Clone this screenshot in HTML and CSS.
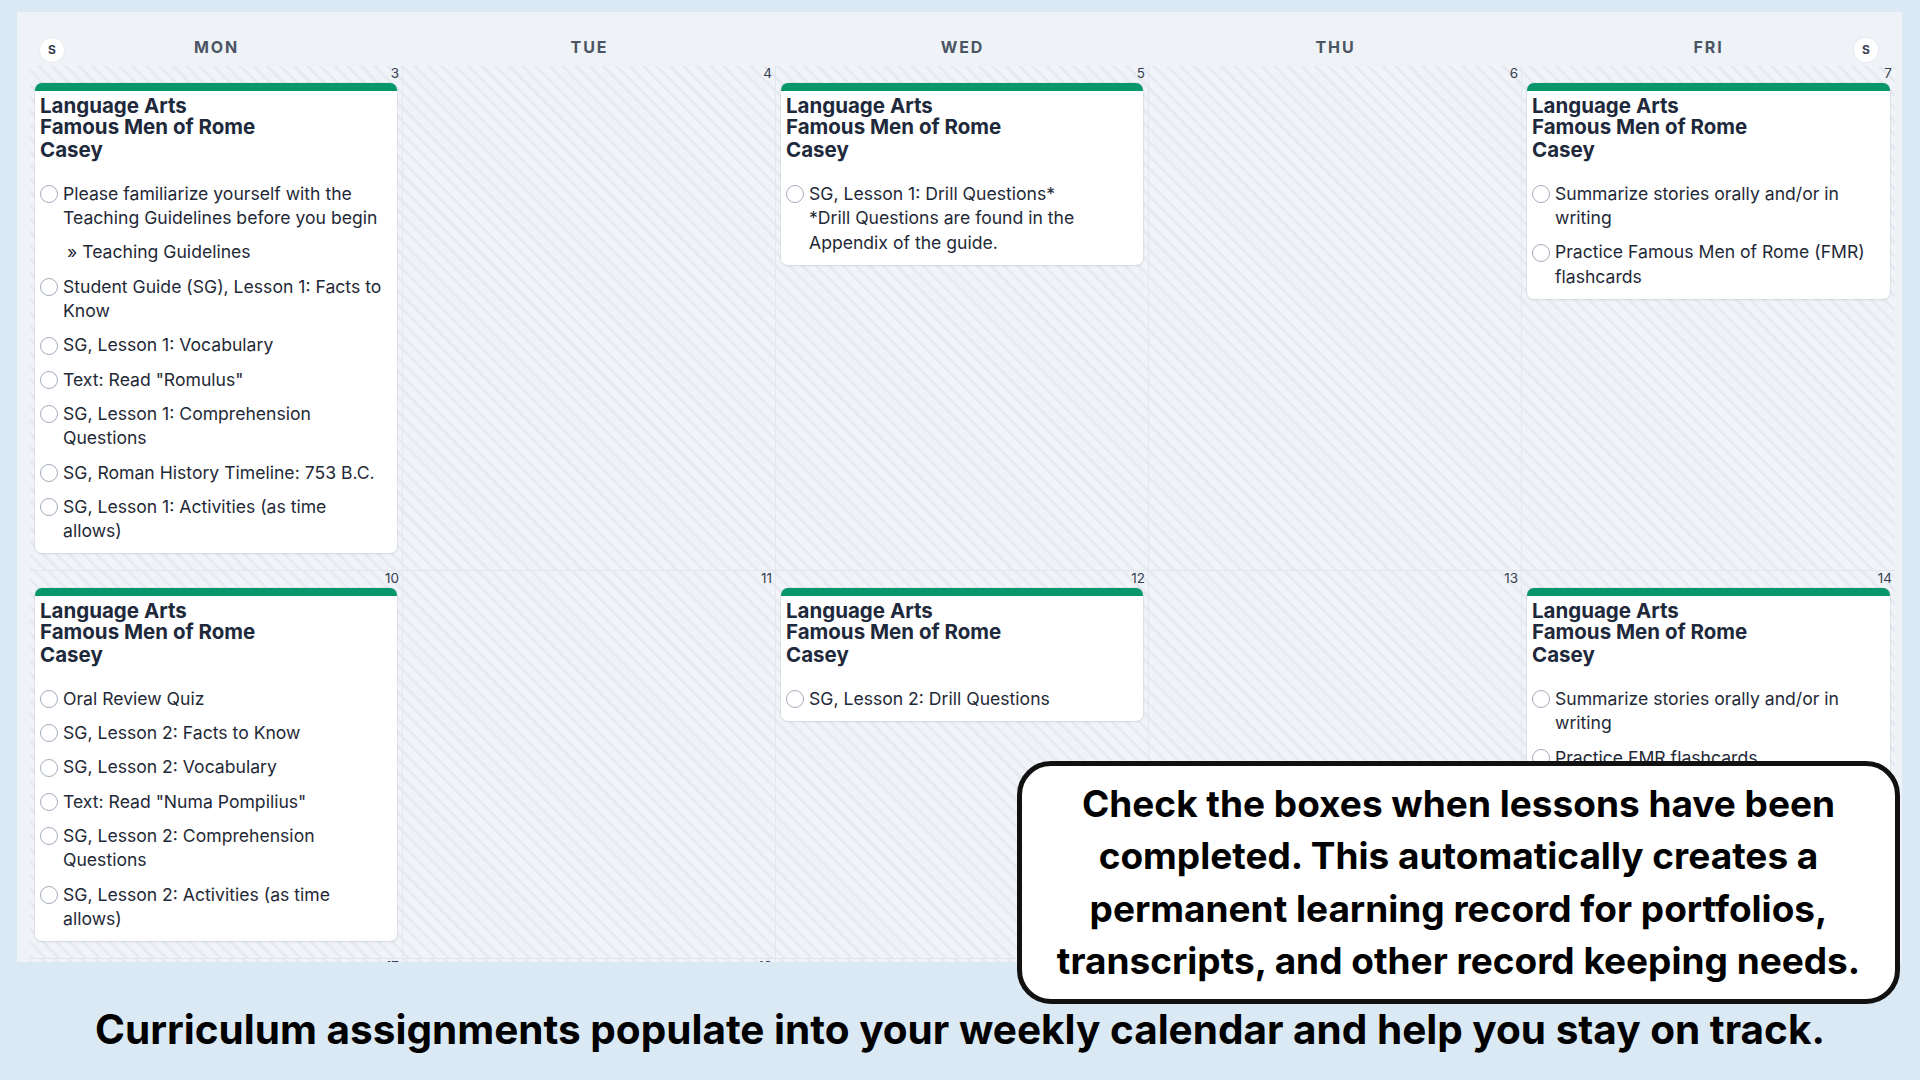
FILE: index.html
```html
<!DOCTYPE html>
<html lang="en">
<head>
<meta charset="utf-8">
<title>Weekly Planner</title>
<link rel="stylesheet" href="styles.css">
</head>
<body>
<div class="page">
  <main class="calendar">
    <div class="week-head">
      <div class="day-head">MON<span class="wk-toggle wk-toggle-start">S</span></div>
      <div class="day-head">TUE</div>
      <div class="day-head">WED</div>
      <div class="day-head">THU</div>
      <div class="day-head">FRI<span class="wk-toggle wk-toggle-end">S</span></div>
    </div>

    <div class="week">
      <div class="day">
        <div class="date">3</div>
        <article class="card">
          <div class="card-title">Language Arts<br>Famous Men of Rome</div>
          <div class="card-student">Casey</div>
          <ul class="tasks">
            <li class="task"><span class="check"></span><span class="task-text">Please familiarize yourself with the Teaching Guidelines before you begin<span class="task-link">» Teaching Guidelines</span></span></li>
            <li class="task"><span class="check"></span><span class="task-text">Student Guide (SG), Lesson 1: Facts to Know</span></li>
            <li class="task"><span class="check"></span><span class="task-text">SG, Lesson 1: Vocabulary</span></li>
            <li class="task"><span class="check"></span><span class="task-text">Text: Read "Romulus"</span></li>
            <li class="task"><span class="check"></span><span class="task-text">SG, Lesson 1: Comprehension Questions</span></li>
            <li class="task"><span class="check"></span><span class="task-text">SG, Roman History Timeline: 753 B.C.</span></li>
            <li class="task"><span class="check"></span><span class="task-text">SG, Lesson 1: Activities (as time allows)</span></li>
          </ul>
        </article>
      </div>
      <div class="day"><div class="date">4</div></div>
      <div class="day">
        <div class="date">5</div>
        <article class="card">
          <div class="card-title">Language Arts<br>Famous Men of Rome</div>
          <div class="card-student">Casey</div>
          <ul class="tasks">
            <li class="task"><span class="check"></span><span class="task-text">SG, Lesson 1: Drill Questions*<br>*Drill Questions are found in the Appendix of the guide.</span></li>
          </ul>
        </article>
      </div>
      <div class="day"><div class="date">6</div></div>
      <div class="day">
        <div class="date">7</div>
        <article class="card">
          <div class="card-title">Language Arts<br>Famous Men of Rome</div>
          <div class="card-student">Casey</div>
          <ul class="tasks">
            <li class="task"><span class="check"></span><span class="task-text">Summarize stories orally and/or in writing</span></li>
            <li class="task"><span class="check"></span><span class="task-text">Practice Famous Men of Rome (FMR) flashcards</span></li>
          </ul>
        </article>
      </div>
    </div>

    <div class="week">
      <div class="day">
        <div class="date">10</div>
        <article class="card">
          <div class="card-title">Language Arts<br>Famous Men of Rome</div>
          <div class="card-student">Casey</div>
          <ul class="tasks">
            <li class="task"><span class="check"></span><span class="task-text">Oral Review Quiz</span></li>
            <li class="task"><span class="check"></span><span class="task-text">SG, Lesson 2: Facts to Know</span></li>
            <li class="task"><span class="check"></span><span class="task-text">SG, Lesson 2: Vocabulary</span></li>
            <li class="task"><span class="check"></span><span class="task-text">Text: Read "Numa Pompilius"</span></li>
            <li class="task"><span class="check"></span><span class="task-text">SG, Lesson 2: Comprehension Questions</span></li>
            <li class="task"><span class="check"></span><span class="task-text">SG, Lesson 2: Activities (as time allows)</span></li>
          </ul>
        </article>
      </div>
      <div class="day"><div class="date">11</div></div>
      <div class="day">
        <div class="date">12</div>
        <article class="card">
          <div class="card-title">Language Arts<br>Famous Men of Rome</div>
          <div class="card-student">Casey</div>
          <ul class="tasks">
            <li class="task"><span class="check"></span><span class="task-text">SG, Lesson 2: Drill Questions</span></li>
          </ul>
        </article>
      </div>
      <div class="day"><div class="date">13</div></div>
      <div class="day">
        <div class="date">14</div>
        <article class="card">
          <div class="card-title">Language Arts<br>Famous Men of Rome</div>
          <div class="card-student">Casey</div>
          <ul class="tasks">
            <li class="task"><span class="check"></span><span class="task-text">Summarize stories orally and/or in writing</span></li>
            <li class="task"><span class="check"></span><span class="task-text">Practice FMR flashcards</span></li>
          </ul>
        </article>
      </div>
    </div>

    <div class="week">
      <div class="day"><div class="date">17</div></div>
      <div class="day"><div class="date">18</div></div>
      <div class="day"><div class="date">19</div></div>
      <div class="day"><div class="date">20</div></div>
      <div class="day"><div class="date">21</div></div>
    </div>
  </main>

  <p class="caption">Curriculum assignments populate into your weekly calendar and help you stay on track.</p>

  <aside class="callout">Check the boxes when lessons have been<br>completed. This automatically creates a<br>permanent learning record for portfolios,<br>transcripts, and other record keeping needs.</aside>
</div>
</body>
</html>
```

FILE: styles.css
```css
* {
  box-sizing: border-box;
}

html, body {
  margin: 0;
  padding: 0;
}

body {
  background: #dbe9f4;
  font-family: "Inter", "Noto Sans", "Liberation Sans", sans-serif;
  color: #1f2937;
  width: 1920px;
  height: 1080px;
  overflow: hidden;
}

.page {
  position: relative;
  width: 1920px;
  height: 1080px;
  padding-top: 12px;
}

/* Calendar panel */
.calendar {
  margin-left: 17px;
  width: 1885px;
  height: 950px;
  padding: 0 7px 0 13px;
  background: #eff3f8;
  overflow: hidden;
}

.week-head,
.week {
  display: grid;
  grid-template-columns: repeat(5, 373px);
}

.day-head {
  position: relative;
  height: 54px;
  padding-top: 24px;
  text-align: center;
  font-size: 16px;
  line-height: 22px;
  font-weight: 700;
  letter-spacing: 0.12em;
  color: #4b5563;
}

.wk-toggle {
  position: absolute;
  top: 26px;
  width: 24px;
  height: 24px;
  border-radius: 50%;
  background: #ffffff;
  box-shadow: 0 0 0 1px rgba(15, 23, 42, 0.03);
  font-size: 12px;
  line-height: 24px;
  font-weight: 700;
  letter-spacing: 0;
  color: #374151;
  text-align: center;
}

.wk-toggle-start { left: 10px; }
.wk-toggle-end { right: 17px; }

/* Week rows with hatched background */
.week {
  align-items: start;
  border-bottom: 1px solid #e1e6ed;
  background: repeating-linear-gradient(45deg, #e7ebf1 0 3px, #f0f3f7 3px 9.5px);
}

.day {
  align-self: stretch;
  padding: 0 5px 17px 5px;
  border-right: 1px solid #e3e8ee;
}

.day:last-child {
  border-right: none;
}

.date {
  height: 14px;
  font-size: 13.5px;
  line-height: 14px;
  text-align: right;
  color: #374151;
  margin-right: -2px;
}

/* Assignment card */
.card {
  margin-top: 3px;
  background: #ffffff;
  border-top: 8px solid #07976a;
  border-radius: 7px;
  padding: 5px 5px 9.5px 5px;
  box-shadow: 0 0 0 1px rgba(15, 23, 42, 0.04), 0 1px 3px rgba(15, 23, 42, 0.08);
}

.card-title,
.card-student {
  font-size: 20.5px;
  line-height: 20.5px;
  font-weight: 700;
  color: #1e293b;
}

.card-student {
  margin-top: 3px;
}

.tasks {
  list-style: none;
  margin: 21px 0 0 0;
  padding: 0;
}

.task {
  display: flex;
  align-items: flex-start;
  gap: 5px;
  font-size: 17.6px;
  line-height: 24.5px;
  color: #1f2937;
}

.task + .task {
  margin-top: 9.75px;
}

.check {
  flex: none;
  width: 18px;
  height: 18px;
  margin-top: 3.25px;
  border-radius: 50%;
  border: 1.5px solid #a3adba;
  background: #ffffff;
}

.task-text {
  flex: 1;
  padding-right: 8px;
}

.task-link {
  display: block;
  margin-top: 9.75px;
  padding-left: 4px;
}

/* Caption under the calendar */
.caption {
  margin: 46px 0 0 0;
  text-align: center;
  font-size: 40.5px;
  line-height: 44px;
  font-weight: 700;
  color: #000000;
}

/* Callout bubble over the lower right of the calendar */
.callout {
  position: absolute;
  left: 1017px;
  top: 761px;
  width: 883px;
  height: 243px;
  padding-top: 12px;
  background: #ffffff;
  border: 5px solid #111111;
  border-radius: 34px;
  text-align: center;
  font-size: 37px;
  line-height: 52.3px;
  font-weight: 700;
  color: #000000;
}
```
